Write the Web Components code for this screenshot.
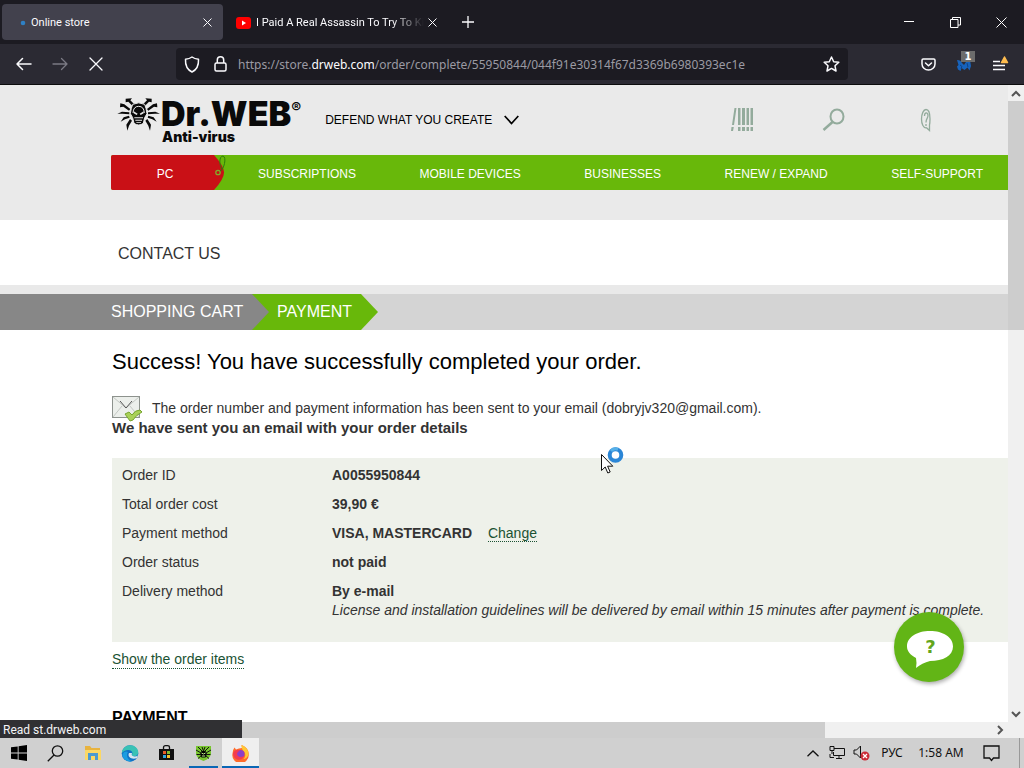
<!DOCTYPE html>
<html lang="en">
<head>
<meta charset="utf-8">
<meta name="viewport" content="width=device-width, initial-scale=1">
<title>Online store</title>
<style>
  html, body { margin: 0; height: 100%; }
  body { overflow: hidden; font-family: "Liberation Sans", Arial, sans-serif; }
</style>
</head>
<body>
<desktop-screen></desktop-screen>
<script>
const RESET = `
  *, *::before, *::after { box-sizing: border-box; }
  button { margin: 0; padding: 0; border: 0; background: none; color: inherit; font: inherit; display: inline-flex; align-items: center; justify-content: center; }
  a { color: inherit; text-decoration: none; }
  svg { display: block; flex: none; }
`;

function define(name, css, html) {
  const template = document.createElement('template');
  template.innerHTML = `<style>${RESET}${css}</style>${html}`;
  customElements.define(name, class extends HTMLElement {
    constructor() {
      super();
      this.attachShadow({ mode: 'open' }).append(template.content.cloneNode(true));
    }
  });
}

/* ---------- browser chrome ---------- */

define('browser-tab', `
  :host { display: flex; align-items: center; width: 221px; height: 36px; padding: 0 8px 0 12px; border-radius: 4px; color: #fbfbfe; font: 11px/16px Roboto, sans-serif; }
  :host([selected]) { background: #42414d; }
  .tab { flex: 1; min-width: 0; height: 100%; justify-content: flex-start; padding-top: 2px; }
  .icon { display: flex; width: 17px; justify-content: center; }
  .title { flex: 1; overflow: hidden; white-space: nowrap; text-align: left; }
  :host([faded]) .title { margin-left: 4px; -webkit-mask-image: linear-gradient(to left, transparent, #000 32px); mask-image: linear-gradient(to left, transparent, #000 32px); }
  .close { width: 16px; height: 20px; }
`, `
  <button class="tab" role="tab"><span class="icon"><slot name="icon"></slot></span><span class="title"><slot></slot></span></button>
  <button class="close" aria-label="Close tab"><svg width="9" height="9" viewBox="0 0 9 9" stroke="currentColor" fill="none"><path d="M.5.5l8 8M8.500.5l-8 8"/></svg></button>
`);

define('tab-strip', `
  :host { display: flex; align-items: center; height: 44px; padding-left: 2px; background: #1c1b22; color: #fbfbfe; }
  .tabs { display: flex; }
  browser-tab[faded] { width: 225px; }
  .new { width: 40px; height: 36px; }
  .window { display: flex; margin-left: auto; }
  .window button { width: 46px; height: 44px; }
`, `
  <div class="tabs" role="tablist">
    <browser-tab selected>
      <svg slot="icon" width="6" height="6" viewBox="0 0 6 6"><circle cx="3" cy="3" r="2.300" fill="#2f80c4"/></svg>
      Online store
    </browser-tab>
    <browser-tab faded>
      <svg slot="icon" width="15" height="12" viewBox="0 0 15 12"><rect width="15" height="12" rx="3" fill="#f00"/><path d="M6 3.500v5L10 6z" fill="#fff"/></svg>
      I Paid A Real Assassin To Try To Kill Me
    </browser-tab>
  </div>
  <button class="new" aria-label="New tab"><svg width="12" height="12" viewBox="0 0 12 12" stroke="currentColor" stroke-width="1.300"><path d="M6 0v12M0 6h12"/></svg></button>
  <div class="window">
    <button aria-label="Minimize"><svg width="10" height="10" viewBox="0 0 10 10" stroke="#fff"><path d="M0 4.500h10"/></svg></button>
    <button aria-label="Restore"><svg width="11" height="11" viewBox="0 0 11 11" stroke="#fff" fill="none"><path d="M.5 2.500h7.500v8H.5zM2.500 2.500V.5h8v7.500H8"/></svg></button>
    <button aria-label="Close window"><svg width="11" height="11" viewBox="0 0 11 11" stroke="#fff"><path d="M.5.5l10 10M10.500.5l-10 10"/></svg></button>
  </div>
`);

define('nav-toolbar', `
  :host { display: flex; align-items: center; height: 41px; padding: 0 6px; background: #2b2a33; border-bottom: 1px solid #0c0c0d; color: #fbfbfe; }
  button { width: 36px; height: 32px; }
  .forward { color: #7b7a84; }
  .address { flex: 1; display: flex; align-items: center; min-width: 0; height: 32px; margin: 0 62px; padding: 0 3px 0 2px; border-radius: 4px; background: #1c1b22; font-size: 12px; }
  .address button { width: 28px; }
  .url { flex: 1; min-width: 0; margin-left: 4px; color: #9b9aa3; white-space: nowrap; overflow: hidden; outline: 0; }
  .url b { font-weight: 400; color: #fbfbfe; }
  .ext { position: relative; }
  .badge { position: absolute; top: 3px; right: 7px; width: 14px; height: 11px; background: #6c6c6c; font: bold 10px/11px "DejaVu Sans", sans-serif; color: #fff; text-align: center; }
`, `
  <button aria-label="Back"><svg width="16" height="14" viewBox="0 0 16 14" fill="none" stroke="currentColor" stroke-width="1.500" stroke-linecap="round" stroke-linejoin="round"><path d="M15 7H1M6.500 1.500L1 7l5.500 5.500"/></svg></button>
  <button class="forward" aria-label="Forward"><svg width="16" height="14" viewBox="0 0 16 14" fill="none" stroke="currentColor" stroke-width="1.300" stroke-linecap="round" stroke-linejoin="round"><path d="M1 7h14M9.500 1.500L15 7l-5.500 5.500"/></svg></button>
  <button aria-label="Stop"><svg width="14" height="14" viewBox="0 0 14 14" stroke="currentColor" stroke-width="1.300" stroke-linecap="round"><path d="M1 1l12 12M13 1L1 13"/></svg></button>
  <div class="address">
    <button aria-label="Tracking protection"><svg width="16" height="17" viewBox="0 0 16 17" fill="none" stroke="currentColor" stroke-width="1.500" stroke-linejoin="round"><path d="M8 1c2 1.500 4 2 6.500 2.200C14.800 8.500 13 13.500 8 16 3 13.500 1.200 8.500 1.500 3.200 4 3 6 2.500 8 1z"/></svg></button>
    <button aria-label="Connection secure"><svg width="13" height="16" viewBox="0 0 13 16" fill="none" stroke="currentColor" stroke-width="1.500"><rect x="1" y="7" width="11" height="8" rx="1.500"/><path d="M3.300 7V4a3.200 3.200 0 016.400 0v3"/></svg></button>
    <div class="url" role="textbox" aria-label="Address" contenteditable="true" spellcheck="false">https://store.<b>drweb.com</b>/order/complete/55950844/044f91e30314f67d3369b6980393ec1e</div>
    <button aria-label="Bookmark"><svg width="17" height="16" viewBox="0 0 17 16" fill="none" stroke="currentColor" stroke-width="1.500" stroke-linejoin="round"><path d="M8.500 1l2.200 4.700 5.100.6-3.800 3.500 1 5.200-4.500-2.600L4 15l1-5.200L1.200 6.300l5.100-.6z"/></svg></button>
  </div>
  <button aria-label="Save to Pocket"><svg width="15" height="13" viewBox="0 0 15 13" fill="none" stroke="currentColor" stroke-width="1.500" stroke-linecap="round" stroke-linejoin="round"><path d="M2.200 1h10.600q1.200 0 1.200 1.200V6a6.500 6 0 01-13 0V2.200Q1 1 2.200 1zM4.500 5l3 2.700 3-2.700"/></svg></button>
  <button class="ext" aria-label="Extension"><svg width="16" height="14" viewBox="0 0 16 14"><path d="M1 3c3 0 4 1 5 3l2 2 2-3 4-2 1 6-1.500 4.500-2-3-3 2.500-3-2-1 3-2.500-1.500-1-3L2.500 8z" fill="#1763bd"/><path d="M4 8l2 1.500-1 2M11 6l1 4" stroke="#0d4287" fill="none"/></svg><span class="badge">1</span></button>
  <button aria-label="Application menu"><svg width="17" height="16" viewBox="0 0 17 16" stroke="#fbfbfe" stroke-width="1.500"><path d="M1 5.500h7M1 9.500h12M1 13.500h12"/><path d="M12.500 1l3 5.500h-6z" fill="#ffbd4f" stroke="#ffbd4f" stroke-linejoin="round"/></svg></button>
`);

/* ---------- store page ---------- */

define('store-logo', `
  :host { display: block; }
  a { display: flex; color: #0a0a0a; font-family: Inter, sans-serif; font-weight: 900; }
  .words { display: grid; margin-left: 1px; }
  .name { display: flex; font-size: 34px; line-height: 33px; height: 33px; }
  .name sup { font-size: 15px; line-height: 22px; font-weight: 700; }
  .line { font-size: 14px; line-height: 14px; margin-left: 1px; }
`, `
  <a href="#" aria-label="Dr.WEB">
    <svg width="43" height="34" viewBox="50 36 129 102" fill="#0a0a0a">
      <path d="M76 41l19-1-5 6 12 12-6 4-12-12-8 2zM154 41l-19-1 5 6-12 12 6 4 12-12 8 2z"/>
      <path d="M60 55l12 3 18 14-4 5-17-12-10 2zM170 55l-12 3-18 14 4 5 17-12 10 2z"/>
      <path d="M51 86l14-6 22 2v6l-21-2zM179 86l-14-6-22 2v6l21-2z"/>
      <path d="M61 110l9-13 16-5 2 6-14 5zM169 110l-9-13-16-5-2 6 14 5z"/>
      <path d="M81 137l-3-18 11-17 6 5-9 15zM149 137l3-18-11-17-6 5 9 15z"/>
      <path d="M97 58q18-9 36 0l4 12 3 16-7 12-4 17q-14 10-28 0l-4-17-7-12 3-16z" stroke="#eaeaea" stroke-width="3"/>
      <path d="M98 84q1-20 17-20t17 20" fill="none" stroke="#eaeaea" stroke-width="3"/>
      <path d="M100 79l12 7-3 4-9-5zM130 79l-12 7 3 4 9-5zM102 97h26v3h-26zM105 104h20v3h-20zM108 111h14v2h-14z" fill="#eaeaea"/>
    </svg>
    <span class="words"><span class="name">Dr.WEB<sup>®</sup></span><span class="line">Anti-virus</span></span>
  </a>
`);

define('store-header', `
  :host { display: block; height: 135px; padding-left: 111px; background: #eaeaea; }
  .top { display: flex; height: 70px; padding: 12px 70px 0 6px; }
  .slogan { align-self: flex-start; height: 46px; margin-left: 24px; gap: 12px; font-size: 12px; line-height: 16px; color: #000; }
  .tools { display: flex; align-self: flex-start; align-items: center; height: 46px; margin-left: auto; gap: 68px; }
  nav { display: flex; height: 35px; background: #68b80a; border-radius: 2px 0 0 2px; color: #fff; font-size: 12px; line-height: 16px; }
  .current { position: relative; display: flex; align-items: center; width: 115px; height: 35px; }
  .current svg { position: absolute; left: 0; top: 0; }
  .current span { position: relative; width: 108px; padding-top: 2px; text-align: center; }
  .links { flex: 1; display: flex; align-items: center; justify-content: space-between; padding: 2px 25px 0 32px; white-space: nowrap; }
`, `
  <div class="top">
    <store-logo></store-logo>
    <button class="slogan">DEFEND WHAT YOU CREATE <svg width="15" height="10" viewBox="0 0 15 10" fill="none" stroke="#000" stroke-width="1.700"><path d="M.7 1l6.800 7.500L14.300 1"/></svg></button>
    <div class="tools">
      <button aria-label="My Dr.Web"><svg width="24" height="24" viewBox="0 0 24 24" fill="#93ab9c"><path d="M4.500 0H6.500L4 17H2zM8 0h2.500v17H8zM12 0h3v17h-3zM16.500 0H19v17h-2.500zM20.500 0H23v17h-2.500zM1.500 19h2.300l-.8 4H1zM8 19h2.500v4H8zM12 19h3v4h-3zM16.500 19H19v4h-2.500zM20.500 19H23v4h-2.500z"/></svg></button>
      <button aria-label="Search"><svg width="24" height="24" viewBox="0 0 24 24" fill="none" stroke="#93ab9c" stroke-width="2"><ellipse cx="15" cy="8.500" rx="6.500" ry="7"/><path d="M10.500 14L1.500 22" stroke-width="2.500"/></svg></button>
      <button aria-label="Support"><svg width="24" height="24" viewBox="0 0 24 24" fill="none" stroke="#93ab9c" stroke-width="1.300"><path d="M15.500 17V22.500L12.500 19.800C9.500 20.500 7.500 16 7.500 11S9.500 1.500 12 1.500s4 4 4 9.500c0 2.500 0 4-.5 6zM10.500 8c0-4 3.500-4 3.500-.5 0 3-2 3-2 7M12 16v2"/></svg></button>
    </div>
  </div>
  <nav>
    <a class="current" href="#"><svg width="115" height="35" viewBox="0 0 115 35"><path d="M2 0h101q10 11 10 17.500T103 35H2q-2 0-2-2V2q0-2 2-2z" fill="#c91016"/><circle cx="107" cy="17.500" r="2.200" fill="none" stroke="#7fae2a" stroke-width="1.300"/><path d="M109 16C113 15 116 2 112 1c-4 0-4 9-1 13" fill="none" stroke="#2e7d0a"/></svg><span>PC</span></a>
    <div class="links"><a href="#">SUBSCRIPTIONS</a><a href="#">MOBILE DEVICES</a><a href="#">BUSINESSES</a><a href="#">RENEW / EXPAND</a><a href="#">SELF-SUPPORT</a></div>
  </nav>
`);

define('order-steps', `
  :host { display: block; border-top: 9px solid #e9e9e9; background: #d4d4d4; color: #fff; font-size: 16px; line-height: 36px; }
  ol { display: flex; margin: 0; padding: 0; list-style: none; }
  li { height: 36px; }
  .done { width: 269px; padding-left: 111px; background: #878787; clip-path: polygon(0 0, 252px 0, 100% 50%, 252px 100%, 0 100%); position: relative; z-index: 1; }
  .now { width: 126px; margin-left: -17px; padding-left: 25px; background: #68b80a; clip-path: polygon(0 0, 109px 0, 100% 50%, 109px 100%, 0 100%); }
`, `<ol><li class="done">SHOPPING CART</li><li class="now" aria-current="step">PAYMENT</li></ol>`);

define('order-summary', `
  :host { display: block; min-height: 184px; padding: 3px 10px 0; background: #eef1ea; }
  table { width: 100%; border-collapse: collapse; font-size: 14px; line-height: 19px; color: #333; }
  th, td { padding: 5px 0; text-align: left; vertical-align: top; }
  th { width: 210px; font-weight: 400; }
  td { font-weight: 700; white-space: nowrap; }
  a { margin-left: 12px; border-bottom: 1px dotted #1b5233; font-weight: 400; line-height: 16px; display: inline-block; color: #1b5233; }
  em { display: block; font-weight: 400; }
`, `
  <table>
    <tr><th scope="row">Order ID</th><td>A0055950844</td></tr>
    <tr><th scope="row">Total order cost</th><td>39,90 €</td></tr>
    <tr><th scope="row">Payment method</th><td>VISA, MASTERCARD <a href="#">Change</a></td></tr>
    <tr><th scope="row">Order status</th><td>not paid</td></tr>
    <tr><th scope="row">Delivery method</th><td>By e-mail<em>License and installation guidelines will be delivered by email within 15 minutes after payment is complete.</em></td></tr>
  </table>
`);

define('chat-button', `
  :host { display: block; width: 70px; height: 70px; }
  button { position: relative; width: 70px; height: 70px; border-radius: 50%; background: #62b516; box-shadow: 1px 2px 4px #0005; }
  svg { position: absolute; left: 12px; top: 18px; }
  span { position: relative; font: bold 18px/24px "DejaVu Sans", sans-serif; color: #62a51c; padding-left: 3px; }
`, `<button aria-label="Ask a question"><svg width="48" height="39" viewBox="0 0 48 39"><path d="M24 1c13 0 23 6 23 15.500S37 31 24 31q-8 2-14 7 1-5 0-10C4 25 1 21 1 16.500 1 7 11 1 24 1z" fill="#fff"/></svg><span>?</span></button>`);

define('store-page', `
  :host { display: block; background: #fff; color: #333; font-size: 14px; line-height: 20px; }
  .contact { display: flex; align-items: center; height: 65px; padding: 2px 0 0 118px; font-size: 16px; }
  main { padding-left: 112px; }
  h1 { margin: 0; padding: 17px 0 19px; font-size: 22px; line-height: 30px; font-weight: 400; color: #000; }
  .sent { display: flex; height: 22px; margin: 0; gap: 10px; line-height: 24px; }
  .strong { margin: 0 0 20px; font-size: 15px; font-weight: 700; }
  .items { display: inline-block; margin: 9px 0 37px; line-height: 17px; border-bottom: 1px dotted #1b5233; color: #1b5233; }
  h2 { margin: 0; font-size: 16px; line-height: 24px; color: #000; }
`, `
  <store-header></store-header>
  <div class="contact"><a href="#">CONTACT US</a></div>
  <order-steps></order-steps>
  <main>
    <h1>Success! You have successfully completed your order.</h1>
    <p class="sent"><svg width="30" height="26" viewBox="0 0 30 26"><rect x=".5" y=".5" width="27" height="21" fill="#ecefeb" stroke="#8d928d"/><path d="M1 1l13 11L27 1M1 21l9-11M27 21l-9-11" fill="none" stroke="#c4c8c4"/><path d="M8 5l6 7 6-7" fill="none" stroke="#555"/><path d="M13 18l4-2 3 3q3-5 8-5l2 2q-6 3-9 8l-3 1z" fill="#a9d158" stroke="#76a52e"/></svg><span>The order number and payment information has been sent to your email (dobryjv320@gmail.com).</span></p>
    <p class="strong">We have sent you an email with your order details</p>
    <order-summary></order-summary>
    <a class="items" href="#">Show the order items</a>
    <h2>PAYMENT</h2>
  </main>
`);

define('browser-view', `
  :host { flex: 1; display: grid; grid-template-columns: 1fr 16px; grid-template-rows: minmax(0, 1fr) 16px; min-height: 0; position: relative; background: #f0f0f0; }
  .port { overflow: hidden; min-width: 0; }
  .vbar { display: flex; flex-direction: column; align-items: center; }
  .thumb { width: 100%; height: 36%; background: #cdcdcd; }
  .vbar button { width: 16px; height: 16px; }
  .down { margin-top: auto; }
  .hbar { display: flex; align-items: center; }
  .hthumb { width: 81.8%; height: 16px; background: #cdcdcd; }
  .hbar button { width: 16px; height: 16px; margin-left: auto; }
  .status { position: absolute; left: 0; bottom: 0; width: 242px; height: 18px; padding-left: 3px; background: #303033; color: #f4f4f6; font: 12px/20px Roboto, sans-serif; }
  chat-button { position: absolute; right: 60px; bottom: 56px; }
  .pointer { position: absolute; left: 601px; top: 361px; }
`, `
  <div class="port"><store-page></store-page></div>
  <div class="vbar">
    <button aria-label="Scroll up"><svg width="10" height="7" viewBox="0 0 10 7" fill="none" stroke="#555" stroke-width="2"><path d="M1 6l4-4 4 4"/></svg></button>
    <div class="thumb"></div>
    <button class="down" aria-label="Scroll down"><svg width="10" height="7" viewBox="0 0 10 7" fill="none" stroke="#555" stroke-width="2"><path d="M1 1l4 4 4-4"/></svg></button>
  </div>
  <div class="hbar"><div class="hthumb"></div><button aria-label="Scroll right"><svg width="7" height="10" viewBox="0 0 7 10" fill="none" stroke="#555" stroke-width="2"><path d="M1 1l4 4-4 4"/></svg></button></div>
  <chat-button></chat-button>
  <div class="status">Read st.drweb.com</div>
  <svg class="pointer" width="24" height="28" viewBox="0 0 24 28"><circle cx="14.500" cy="9" r="5.800" fill="#fff" stroke="#2b86d6" stroke-width="4"/><path d="M10 5a6 6 0 017-1.500" fill="none" stroke="#56b0e8" stroke-width="3"/><path d="M.5 8.500v16l3.700-3.500 2.600 6 2.400-1-2.600-5.800h5.200z" fill="#fff" stroke="#111"/></svg>
`);

/* ---------- taskbar ---------- */

define('task-bar', `
  :host { display: flex; height: 30px; background: #d0d0d0; color: #111; font: 12px/16px "Noto Sans", sans-serif; }
  .apps { display: flex; }
  .apps button { width: 37px; height: 30px; }
  .apps .running { border-bottom: 2px solid #0a67b5; width: 29px; margin: 0 4px; padding-top: 2px; }
  .apps .active { border-bottom: 2px solid #0a67b5; padding-top: 2px; background: #efefef; }
  .tray { display: flex; align-items: center; margin-left: auto; padding-right: 4px; }
  .tray button { height: 30px; }
  .small { width: 24px; }
  .lang { width: 38px; }
  .clock { width: 60px; }
  .notes { width: 40px; }
  .peek { width: 9px; border-right: 1px solid #999; }
`, `
  <div class="apps">
    <button aria-label="Start"><svg width="16" height="16" viewBox="0 0 16 16"><path d="M0 2.300L6.700 1.400v6.100H0zM7.600 1.200L16 0v7.500H7.600zM0 8.400h6.700v6.200L0 13.700zM7.600 8.400H16V16l-8.400-1.200z"/></svg></button>
    <button aria-label="Search"><svg width="17" height="17" viewBox="0 0 17 17" fill="none" stroke="#111" stroke-width="1.300"><circle cx="10.500" cy="6" r="5.200"/><path d="M7 10L.8 16.300"/></svg></button>
    <button aria-label="File Explorer"><svg width="18" height="16" viewBox="0 0 18 16"><path d="M1 1h5l1.500 2H16v12H1z" fill="#e8b33f"/><path d="M1 5h16v10H1z" fill="#fbd865"/><path d="M4 8h10v7h-3v-4H7v4H4z" fill="#4b9ad0"/></svg></button>
    <button aria-label="Edge"><svg width="18" height="17" viewBox="0 0 18 17"><circle cx="9" cy="8.500" r="8.300" fill="#1172c6"/><path d="M.8 8C1.500 3 5 .2 9 .2c5 0 8.300 3.500 8.300 7 0 2.800-2 4-4.300 4-2 0-2.600-1-1.600-2.500C12 5 5 3 .8 8z" fill="#39c2b5"/><path d="M7 7c-2 2.500-1 7.500 4 9.400C5 17 1 13 1.500 9 3 6 5.500 6 7 7z" fill="#1b9de0"/><path d="M8 8c-2 4 3 7 8 5l1-2.500q-2 1.200-4.500.8C10.500 11 10.500 9.500 11 8z" fill="#d5e6ef"/></svg></button>
    <button aria-label="Store"><svg width="15" height="16" viewBox="0 0 15 16"><path d="M4.500 4V2.500Q4.500.7 6.500.7h2q2 0 2 1.800V4" fill="none" stroke="#111" stroke-width="1.300"/><path d="M0 4h15v11H0z" fill="#111"/><path d="M4 6h3v3H4z" fill="#e85b2a"/><path d="M8 6h3v3H8z" fill="#7cba33"/><path d="M4 10h3v3H4z" fill="#30a5de"/><path d="M8 10h3v3H8z" fill="#f6bf2e"/></svg></button>
    <button class="running" aria-label="Dr.Web"><svg width="17" height="16" viewBox="0 0 17 16"><path d="M1 1h15v8q-1 5-7.500 7Q2 14 1 9z" fill="#78c62e"/><path d="M6.500 6h4L12 9l-1.500 3.500h-4L5 9z"/><path d="M3 2l4 4M14 2l-4 4M1 5l5 3M16 5l-5 3M1.500 9.500H6m5 0h4.500M3 13.500l3.500-3M14 13.500l-3.500-3M7 2l1.500 4L10 2" stroke="#111" fill="none"/><path d="M6.500 8l2 1 2-1M7 11h3" stroke="#b8e985" fill="none"/></svg></button>
    <button class="active" aria-label="Firefox"><svg width="17" height="17" viewBox="0 0 17 17"><path d="M2.500 2.500l1.500 2L7 3.500l3-.5L9.500 0C14 2 17 5 16.700 9.500A8.200 8 0 11.500 8.500Q.5 5 2.500 2.500z" fill="#ff6b2b"/><path d="M9.500 0C14 2 17 5 16.500 10q-2 4-5 4 3-3 1-7-3-2-3-7z" fill="#ffc832"/><circle cx="8.500" cy="9" r="4" fill="#8d3fc7"/><path d="M1 8q2-4 7-3L6 7q-2 2 0 4t6 0q-2 5-7 3.500Q1 13 1 8z" fill="#f43b4f"/></svg></button>
  </div>
  <div class="tray">
    <button class="small" aria-label="Show hidden icons"><svg width="12" height="7" viewBox="0 0 12 7" fill="none" stroke="#111" stroke-width="1.300"><path d="M.5 6.300L6 1l5.500 5.300"/></svg></button>
    <button class="small" aria-label="Network"><svg width="17" height="14" viewBox="0 0 17 14" fill="none" stroke="#111"><path d="M5 2.500h10.500v7H4.500V6M10 9.500v3M7 12.500h6M1 .5h4v4H1zM3 4.500v3.500M1 8v3.500h4"/></svg></button>
    <button class="small" aria-label="Volume"><svg width="17" height="16" viewBox="0 0 17 16"><path d="M1 5h2.500l4-4v12l-4-4H1z" fill="none" stroke="#111"/><circle cx="12" cy="11" r="4.500" fill="#cc2b36"/><path d="M10 9l4 4M14 9l-4 4" stroke="#fff" stroke-width="1.300"/></svg></button>
    <button class="lang">РУС</button>
    <button class="clock">1:58 AM</button>
    <button class="notes" aria-label="Notifications"><svg width="17" height="17" viewBox="0 0 17 17" fill="none" stroke="#111" stroke-width="1.300"><path d="M1 1h15v12h-5.500L8.500 15.500 6.500 13H1z"/></svg></button>
    <button class="peek" aria-label="Show desktop"></button>
  </div>
`);

define('desktop-screen', `
  :host { display: flex; flex-direction: column; height: 100vh; }
  nav-toolbar { font-family: "Noto Sans", sans-serif; }
`, `<tab-strip></tab-strip><nav-toolbar></nav-toolbar><browser-view></browser-view><task-bar></task-bar>`);
</script>
</body>
</html>
